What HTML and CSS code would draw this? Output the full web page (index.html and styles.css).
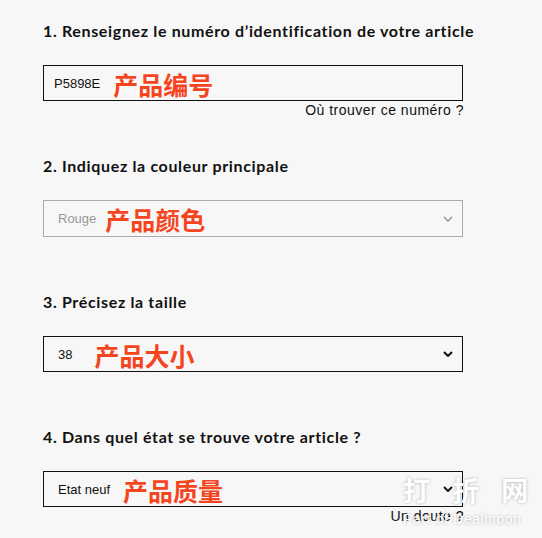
FILE: index.html
```html
<!DOCTYPE html>
<html lang="fr">
<head>
    <meta charset="UTF-8">
    <meta name="viewport" content="width=device-width, initial-scale=1.0">
    <title>Article</title>
    <link rel="stylesheet" href="styles.css">
</head>
<body>

<div class="container">
    <div class="field">
        <h3 class="field-title">1. Renseignez le numéro d’identification de votre article</h3>
        <div class="control">
            <span class="value value--input">P5898E</span>
            <span class="note">产品编号</span>
        </div>
        <a class="hint">Où trouver ce numéro ?</a>
    </div>

    <div class="field">
        <h3 class="field-title">2. Indiquez la couleur principale</h3>
        <div class="control control--disabled">
            <span class="value">Rouge</span>
            <span class="note note--tight">产品颜色</span>
            <svg class="chevron" width="10" height="6" viewBox="0 0 10 6"><path d="M1 1l4 4 4-4" fill="none" stroke="currentColor" stroke-width="1.6"/></svg>
        </div>
    </div>

    <div class="field">
        <h3 class="field-title">3. Précisez la taille</h3>
        <div class="control">
            <span class="value">38</span>
            <span class="note note--wide">产品大小</span>
            <svg class="chevron" width="10" height="6" viewBox="0 0 10 6"><path d="M1 1l4 4 4-4" fill="none" stroke="currentColor" stroke-width="2"/></svg>
        </div>
    </div>

    <div class="field">
        <h3 class="field-title">4. Dans quel état se trouve votre article ?</h3>
        <div class="control">
            <span class="value">Etat neuf</span>
            <span class="note">产品质量</span>
            <svg class="chevron" width="10" height="6" viewBox="0 0 10 6"><path d="M1 1l4 4 4-4" fill="none" stroke="currentColor" stroke-width="2"/></svg>
        </div>
        <a class="hint">Un doute ?</a>
    </div>
</div>

<div class="watermark">
    <div class="watermark-logo">打 折 网</div>
    <div class="watermark-sub">Part of Dealmoon</div>
</div>

</body>
</html>
```

FILE: styles.css
```css
body {
    font-family: "Liberation Sans", Arial, sans-serif;
    background-color: #f7f7f7;
    color: #111;
    margin: 0;
    padding: 0;
}

.container {
    width: 420px;
    padding: 21px 0 0 43px;
}

.field {
    margin-bottom: 55px;
}

.field-title {
    font-family: Lato, "Noto Sans", sans-serif;
    font-weight: 700;
    font-size: 16px;
    letter-spacing: 0.65px;
    line-height: 20px;
    margin: 0 0 24px;
    color: #111;
    white-space: nowrap;
}

.control {
    display: flex;
    align-items: center;
    height: 36px;
    padding: 0 9px 0 14px;
    border: 1px solid #111;
    background-color: #f7f7f7;
    box-sizing: border-box;
    font-size: 13px;
}

.control--disabled {
    border-color: #aaa;
    color: #999;
    height: 37px;
}

.value--input {
    margin-left: -4px;
}

.note {
    margin-left: 13px;
    font-family: "Noto Sans CJK SC", sans-serif;
    font-weight: 700;
    font-size: 25px;
    line-height: 1;
    color: #f5451f;
    position: relative;
    top: 1px;
}

.note--tight {
    margin-left: 9px;
}

.note--wide {
    margin-left: 22px;
}

.chevron {
    margin-left: auto;
}

.hint {
    display: block;
    text-align: right;
    font-size: 14px;
    letter-spacing: 0.5px;
    line-height: 18px;
    color: #111;
    margin-right: -1px;
    margin-bottom: -18px;
}

.watermark {
    position: absolute;
    left: 403px;
    top: 474px;
    color: #fff;
    text-shadow: 0 0 3px rgba(0, 0, 0, 0.3);
}

.watermark-logo {
    font-family: "Noto Sans CJK SC", sans-serif;
    font-weight: 700;
    font-size: 27px;
    line-height: 32px;
    letter-spacing: 8px;
    white-space: nowrap;
}

.watermark-sub {
    margin-top: 5px;
    font-size: 14px;
    letter-spacing: 0.6px;
    line-height: 16px;
    white-space: nowrap;
}
```
